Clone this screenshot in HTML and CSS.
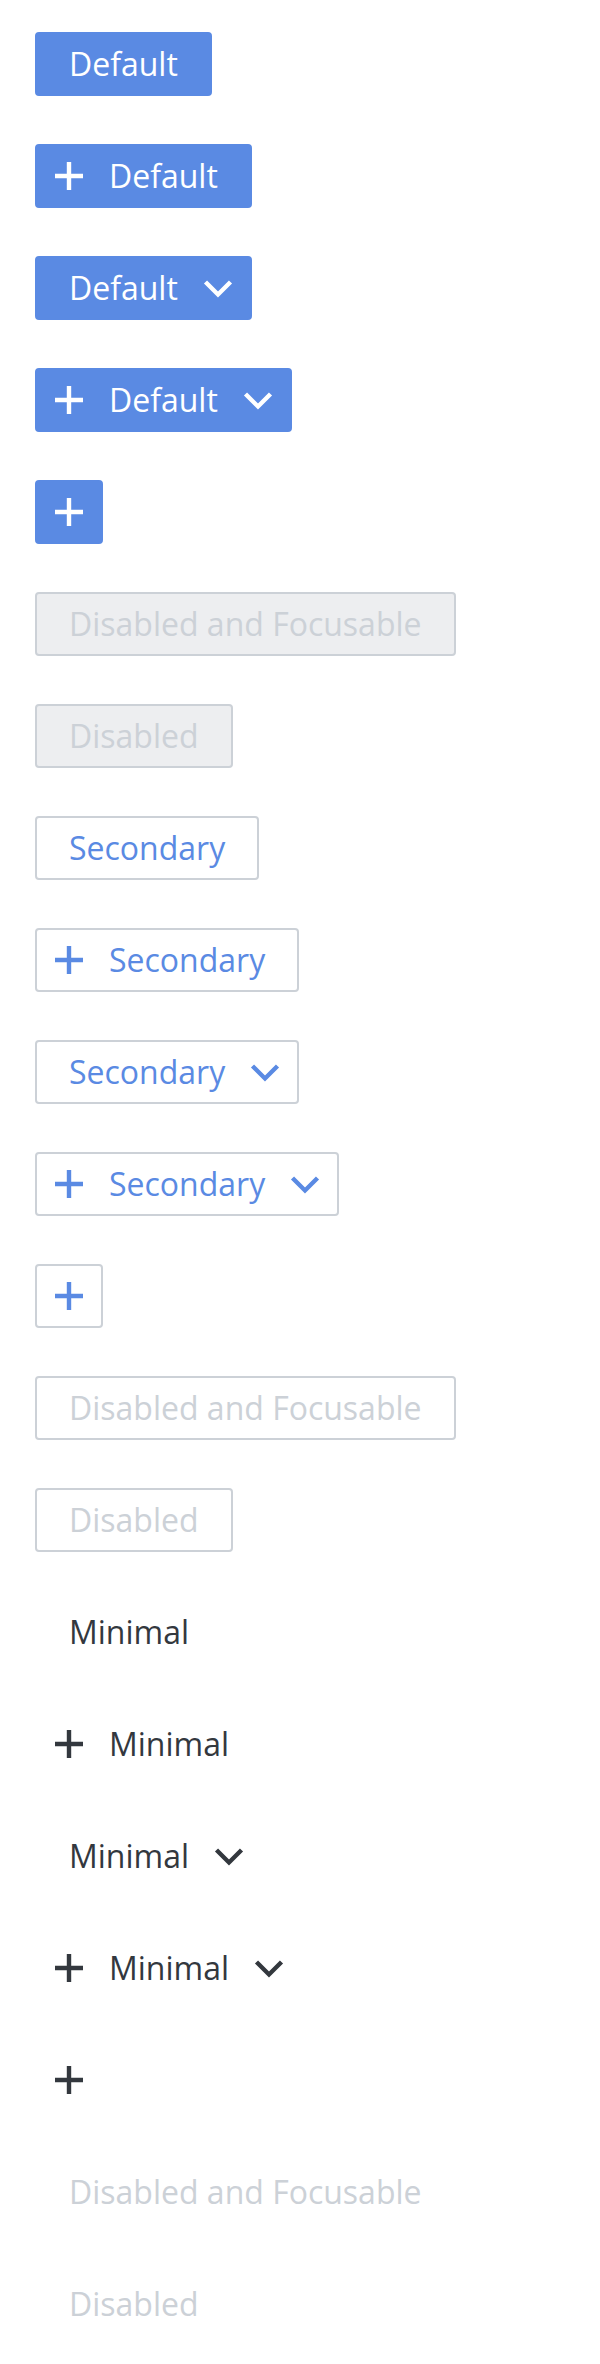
FILE: index.html
```html
<!DOCTYPE html>
<html>
<head>
<meta charset="utf-8">
<link rel="stylesheet" href="styles.css">
</head>
<body>
<div class="stack">
  <div class="row"><button class="btn primary">Default</button></div>
  <div class="row"><button class="btn primary has-left"><svg class="ic" viewBox="0 0 32 32"><path d="M2 16H30M16 2V30"/></svg><span>Default</span></button></div>
  <div class="row"><button class="btn primary has-right"><span>Default</span><svg class="ic" viewBox="0 0 32 32"><path d="M3.5 10L16 22.5L28.5 10"/></svg></button></div>
  <div class="row"><button class="btn primary has-left has-right"><svg class="ic" viewBox="0 0 32 32"><path d="M2 16H30M16 2V30"/></svg><span>Default</span><svg class="ic" viewBox="0 0 32 32"><path d="M3.5 10L16 22.5L28.5 10"/></svg></button></div>
  <div class="row"><button class="btn primary icon-only"><svg class="ic" viewBox="0 0 32 32"><path d="M2 16H30M16 2V30"/></svg></button></div>
  <div class="row"><button class="btn disabled">Disabled and Focusable</button></div>
  <div class="row"><button class="btn disabled">Disabled</button></div>

  <div class="row"><button class="btn secondary">Secondary</button></div>
  <div class="row"><button class="btn secondary has-left"><svg class="ic" viewBox="0 0 32 32"><path d="M2 16H30M16 2V30"/></svg><span>Secondary</span></button></div>
  <div class="row"><button class="btn secondary has-right"><span>Secondary</span><svg class="ic" viewBox="0 0 32 32"><path d="M3.5 10L16 22.5L28.5 10"/></svg></button></div>
  <div class="row"><button class="btn secondary has-left has-right"><svg class="ic" viewBox="0 0 32 32"><path d="M2 16H30M16 2V30"/></svg><span>Secondary</span><svg class="ic" viewBox="0 0 32 32"><path d="M3.5 10L16 22.5L28.5 10"/></svg></button></div>
  <div class="row"><button class="btn secondary icon-only"><svg class="ic" viewBox="0 0 32 32"><path d="M2 16H30M16 2V30"/></svg></button></div>
  <div class="row"><button class="btn secondary-disabled">Disabled and Focusable</button></div>
  <div class="row"><button class="btn secondary-disabled">Disabled</button></div>

  <div class="row"><button class="btn minimal">Minimal</button></div>
  <div class="row"><button class="btn minimal has-left"><svg class="ic" viewBox="0 0 32 32"><path d="M2 16H30M16 2V30"/></svg><span>Minimal</span></button></div>
  <div class="row"><button class="btn minimal has-right"><span>Minimal</span><svg class="ic" viewBox="0 0 32 32"><path d="M3.5 10L16 22.5L28.5 10"/></svg></button></div>
  <div class="row"><button class="btn minimal has-left has-right"><svg class="ic" viewBox="0 0 32 32"><path d="M2 16H30M16 2V30"/></svg><span>Minimal</span><svg class="ic" viewBox="0 0 32 32"><path d="M3.5 10L16 22.5L28.5 10"/></svg></button></div>
  <div class="row"><button class="btn minimal icon-only"><svg class="ic" viewBox="0 0 32 32"><path d="M2 16H30M16 2V30"/></svg></button></div>
  <div class="row"><button class="btn minimal-disabled">Disabled and Focusable</button></div>
  <div class="row"><button class="btn minimal-disabled">Disabled</button></div>
</div>
</body>
</html>
```
FILE: styles.css
```css
html, body {
  margin: 0;
  padding: 0;
  background: #ffffff;
}
body {
  font-family: "Open Sans", "Noto Sans", sans-serif;
}
.stack {
  display: flex;
  flex-direction: column;
  gap: 48px;
  padding: 32px 0 0 35px;
}
.row {
  display: flex;
  height: 64px;
}
.btn {
  display: inline-flex;
  align-items: center;
  gap: 24px;
  box-sizing: border-box;
  height: 64px;
  padding: 0 32px;
  border: 2px solid transparent;
  border-radius: 4px;
  font-family: "Open Sans", "Noto Sans", sans-serif;
  font-size: 32px;
  line-height: 60px;
  background: transparent;
  cursor: pointer;
  white-space: nowrap;
}
.btn.has-left { padding-left: 16px; }
.btn.has-right { padding-right: 16px; }
.btn.icon-only { padding: 0 16px; }
.ic {
  width: 32px;
  height: 32px;
  flex: none;
  fill: none;
  stroke: currentColor;
  stroke-width: 4.4;
}
.primary {
  background: #5a8ae3;
  border-color: #5a8ae3;
  color: #ffffff;
}
.disabled {
  background: #edeef0;
  border-color: #ccd1d7;
  color: #ccd1d7;
}
.secondary {
  background: #ffffff;
  border-color: #ccd1d7;
  color: #5a8ae3;
}
.secondary-disabled {
  background: #ffffff;
  border-color: #ccd1d7;
  color: #ccd1d7;
}
.minimal {
  color: #33383e;
}
.minimal-disabled {
  color: #ccd1d7;
}
```
